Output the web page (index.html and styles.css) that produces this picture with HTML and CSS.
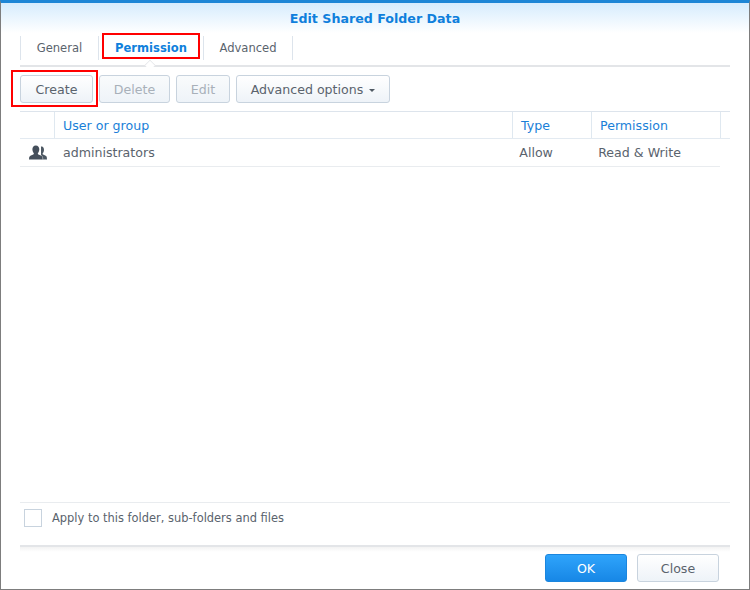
FILE: index.html
```html
<!DOCTYPE html>
<html lang="en">
<head>
<meta charset="utf-8">
<title>Edit Shared Folder Data</title>
<link rel="stylesheet" href="styles.css">
</head>
<body>
<div class="window">
  <header class="title">Edit Shared Folder Data</header>
  <div class="content">
    <nav class="tabs">
      <div class="tab">General</div>
      <div class="tab tab-active">Permission<span class="notch"></span><span class="mark mark-tab"></span></div>
      <div class="tab">Advanced</div>
    </nav>
    <div class="toolbar">
      <button class="btn btn-create">Create<span class="mark mark-create"></span></button>
      <button class="btn btn-delete" disabled>Delete</button>
      <button class="btn btn-edit" disabled>Edit</button>
      <button class="btn btn-adv">Advanced options<span class="caret"></span></button>
    </div>
    <div class="table">
      <div class="row head">
        <div class="cell c-icon"></div>
        <div class="cell c-name">User or group</div>
        <div class="cell c-type">Type</div>
        <div class="cell c-perm">Permission</div>
      </div>
      <div class="row body-row">
        <div class="cell c-icon">
          <svg class="user-icon" width="18" height="16" viewBox="0 0 18 16" aria-hidden="true">
            <path fill="#4d5863" d="M11.8 1.200c2.100 0 3.300 1.700 3.200 3.700-.1 1.400-.6 2.600-1.300 3.300-.2.800.1 1.200 1 1.600 1.400.6 2.800 1.200 3.100 2.400l.2 2.200H12V1.200z"/>
            <path fill="#454f5b" stroke="#fff" stroke-width="1" paint-order="stroke" d="M6.800.4c2.300 0 3.600 1.800 3.500 4-.1 1.500-.6 2.800-1.400 3.600-.2.900.1 1.300 1.100 1.700 1.700.7 3.200 1.300 3.500 2.600l.2 2.100H0l.2-2.100c.3-1.300 1.800-1.900 3.500-2.600 1-.4 1.300-.8 1.100-1.700C4 7.200 3.500 5.900 3.400 4.400 3.300 2.200 4.500.4 6.800.4z"/>
          </svg>
        </div>
        <div class="cell c-name">administrators</div>
        <div class="cell c-type">Allow</div>
        <div class="cell c-perm">Read &amp; Write</div>
      </div>
    </div>
    <div class="apply">
      <span class="checkbox"></span>
      <span class="apply-label">Apply to this folder, sub-folders and files</span>
    </div>
    <footer class="footer">
      <button class="btn btn-primary">OK</button>
      <button class="btn btn-close">Close</button>
    </footer>
  </div>
</div>
</body>
</html>
```
FILE: styles.css
```css
* { box-sizing: border-box; }
html, body { margin: 0; padding: 0; }
body {
  width: 750px;
  height: 590px;
  overflow: hidden;
  background: #fff;
  font-family: "DejaVu Sans", Verdana, sans-serif;
  font-size: 12.6px;
  color: #5a636d;
}
.window {
  width: 750px;
  height: 590px;
  display: flex;
  flex-direction: column;
  background: #fff;
  border-top: 3px solid #1d86d6;
  border-left: 1px solid #7d7d7d;
  border-right: 1px solid #7d7d7d;
  border-bottom: 1px solid #7d7d7d;
}
.title {
  height: 30px;
  flex: none;
  padding-top: 8px;
  line-height: 16px;
  text-align: center;
  font-size: 12.65px;
  font-weight: bold;
  color: #0f7fdc;
  background: linear-gradient(#d6ecfd, #ffffff);
}
.content {
  flex: 1;
  display: flex;
  flex-direction: column;
  padding: 0 19px 0;
  min-height: 0;
}
.tabs {
  height: 34px;
  margin-top: 0;
  padding-top: 3px;
  display: flex;
  flex: none;
  border-bottom: 2px solid #e3e5e8;
  align-items: flex-start;
}
.tab {
  position: relative;
  height: 24px;
  line-height: 25px;
  text-align: center;
  border-left: 1px solid #dde4ec;
  font-size: 11.55px;
  color: #5a636d;
  width: 78px;
}
.tab-active {
  width: 105px;
  font-weight: bold;
  color: #0f7fdc;
}
.tab:last-child {
  width: 90px;
  border-right: 1px solid #dde4ec;
}
.notch {
  position: absolute;
  left: 46px;
  top: 24px;
  width: 10px;
  height: 10px;
  background: #fff;
  border-left: 1px solid #e3e5e8;
  border-top: 1px solid #e3e5e8;
  transform: rotate(45deg) scale(0.75);
}
.mark {
  position: absolute;
  border: 2px solid #f00;
  pointer-events: none;
}
.mark-tab { left: 3px; top: -3px; width: 98px; height: 26px; }
.mark-create { left: -10px; top: -6px; width: 87px; height: 37px; }
.toolbar {
  display: flex;
  gap: 6px;
  flex: none;
  margin-top: 8px;
  height: 28px;
}
.btn {
  position: relative;
  height: 28px;
  padding: 1px 0 0;
  border: 1px solid #c8d3de;
  border-radius: 3px;
  background: linear-gradient(#ffffff, #eef3f8);
  font-family: inherit;
  font-size: 12.6px;
  color: #5a636d;
}
.btn:disabled { color: #a8b0b9; background: linear-gradient(#f9fbfc, #eef3f8); }
.btn-create { width: 73px; }
.btn-delete { width: 71px; }
.btn-edit { width: 54px; }
.btn-adv { width: 154px; }
.caret {
  display: inline-block;
  margin-left: 6px;
  vertical-align: 2px;
  border-left: 3px solid transparent;
  border-right: 3px solid transparent;
  border-top: 3px solid #505a64;
}
.table {
  margin-top: 8px;
  width: 710px;
  flex: 1;
  border-top: 1px solid #dde4ec;
  min-height: 0;
}
.row { display: flex; }
.head {
  height: 27px;
  line-height: 28px;
  color: #1a7fd8;
  border-bottom: 1px solid #e3eaf1;
}
.head .cell { border-right: 1px solid #dfe8f0; }
.body-row {
  height: 28px;
  line-height: 27px;
  border-bottom: 1px solid #e9ecef;
  width: 700px;
}
.cell { height: 100%; padding-left: 8px; white-space: nowrap; }
.c-icon { width: 35px; padding: 0 0 0 2px; display: flex; align-items: center; justify-content: center; }
.c-name { width: 458px; }
.c-type { width: 79px; }
.c-perm { width: 129px; }
.body-row .c-type { padding-left: 7px; }
.body-row .c-perm { padding-left: 7px; }
.apply {
  height: 43px;
  flex: none;
  display: flex;
  align-items: flex-start;
  padding: 6px 4px 0 4px;
  border-top: 1px solid #e9ecef;
  width: 710px;
  gap: 10px;
}
.checkbox {
  width: 18px;
  height: 18px;
  flex: none;
  border: 1px solid #c8d3de;
  background: #fff;
}
.apply-label { font-size: 11.45px; line-height: 18px; }
.footer {
  height: 44px;
  width: 710px;
  flex: none;
  border-top: 2px solid #e3e5e8;
  display: flex;
  justify-content: flex-end;
  gap: 10px;
  padding: 7px 11px 0 0;
  background: linear-gradient(#f3f3f3, #fff 5px);
}
.btn-primary {
  width: 82px;
  border-color: #1b86de;
  background: linear-gradient(#2fa4fb, #1787e6);
  color: #fff;
}
.btn-close { width: 82px; }
```
